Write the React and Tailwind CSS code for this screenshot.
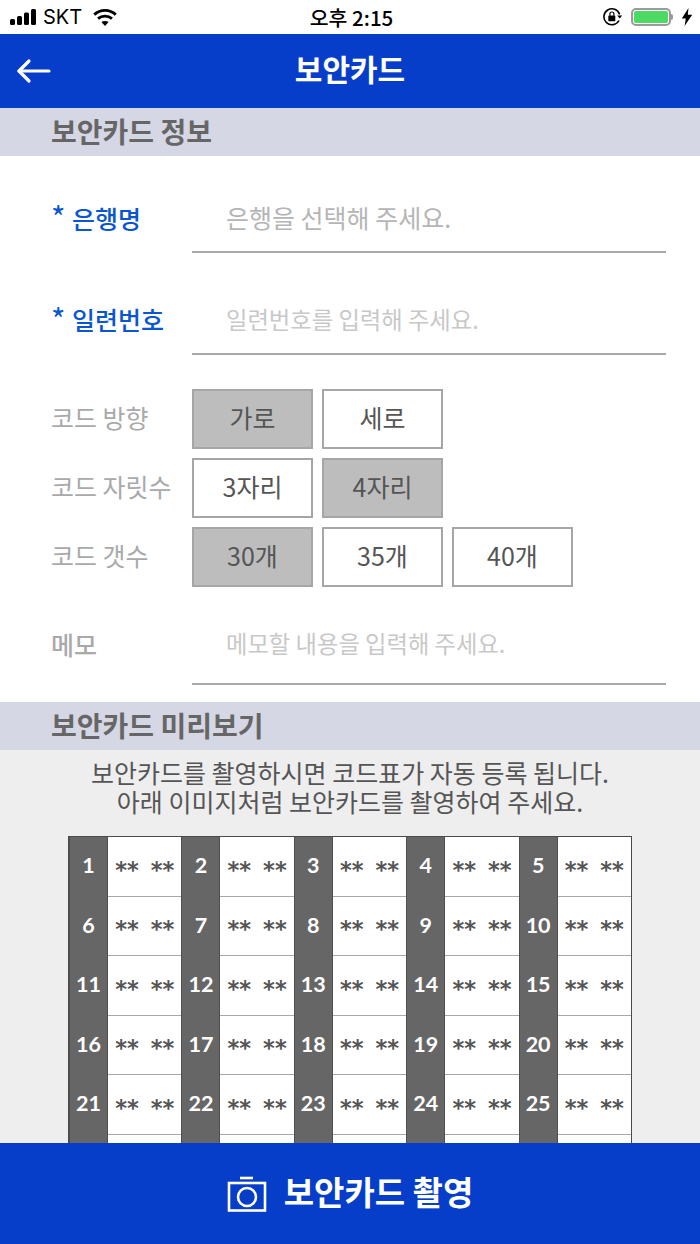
import React from 'react';

const KR = { fontFamily: '"Noto Sans CJK KR", "Noto Sans", sans-serif' };

const Signal = () => (
  <svg width="28" height="16" viewBox="0 0 28 16" fill="#000">
    <rect x="0" y="10" width="5" height="6" rx="1.5" />
    <rect x="7" y="7" width="5" height="9" rx="1.5" />
    <rect x="14" y="3.5" width="5" height="12.5" rx="1.5" />
    <rect x="21" y="0" width="5" height="16" rx="1.5" />
  </svg>
);

const Wifi = () => (
  <svg width="24" height="17" viewBox="0 0 24 17" fill="none" stroke="#000" strokeWidth="2.8">
    <path d="M1.2 5.6C7.4 0 16.6 0 22.8 5.6" />
    <path d="M5 9.6c4-3.4 10-3.4 14 0" />
    <path d="M12 17l-3.6-4c2-1.5 5.2-1.5 7.2 0z" fill="#000" stroke="none" />
  </svg>
);

const RotationLock = () => (
  <svg width="20" height="20" viewBox="0 0 20 20" fill="none">
    <path d="M17 13.5A8 8 0 1 1 17.6 7.5" stroke="#000" strokeWidth="1.6" />
    <path d="M15.2 8.4h5l-2.5 3z" fill="#000" />
    <rect x="6.3" y="8.6" width="7" height="5.6" rx="0.8" fill="#000" />
    <path d="M7.9 8.8V7a2 2 0 0 1 4 0v1.8" stroke="#000" strokeWidth="1.2" />
  </svg>
);

const Battery = () => (
  <div className="flex items-center">
    <div className="w-[40px] h-[18px] rounded-[5px] border-2 border-[#9a9a9a] p-[1px]">
      <div className="w-full h-full rounded-[2px] bg-[#4cd964]" />
    </div>
    <div className="w-[2px] h-[6px] bg-[#9a9a9a] rounded-r-sm" />
  </div>
);

const Bolt = () => (
  <svg width="12" height="18" viewBox="0 0 12 18" fill="#000">
    <path d="M7.5 0L0.8 10.4h4L3.6 18l7.6-11.2H6.8z" />
  </svg>
);

const BackArrow = () => (
  <svg width="36" height="26" viewBox="0 0 36 26" fill="none" stroke="#fff" strokeWidth="3.2" strokeLinecap="round" strokeLinejoin="round">
    <path d="M3 13h30" />
    <path d="M13 3L3 13l10 10" />
  </svg>
);

const Camera = () => (
  <svg width="40" height="36" viewBox="0 0 40 36" fill="none" stroke="#fff" strokeWidth="2.6">
    <path d="M13 2h13" />
    <rect x="2" y="7" width="36" height="27.5" />
    <circle cx="20" cy="21" r="9" />
  </svg>
);

const SectionBar = ({ children }) => (
  <div className="h-[48px] bg-[#d5d7e4] pl-[51px] pb-[2px] flex items-center text-[28px] font-bold text-[#666666]">
    {children}
  </div>
);

const InputRow = ({ label, placeholder, className, textClass, shift }) => (
  <div className={`flex items-center ${className}`}>
    <div className={`w-[192px] h-full pl-[51px] shrink-0 flex items-center ${shift}`}>{label}</div>
    <div className={`flex-1 h-full pl-[34px] flex items-center border-b-2 border-[#a8a8a8] ${shift} ${textClass}`}>{placeholder}</div>
  </div>
);

const Required = ({ children }) => (
  <span className="flex items-center text-[25px] font-medium text-[#0a55d0]">
    <span className="text-[31px] leading-[31px] w-[21px] font-normal -mt-[4px]">*</span>
    {children}
  </span>
);

const Opt = ({ label, on }) => (
  <div className={`w-[121px] h-[60px] pb-[3px] flex items-center justify-center border-2 border-[#a6a6a6] text-[25px] text-[#555555] ${on ? 'bg-[#bdbdbd]' : 'bg-white'}`}>
    {label}
  </div>
);

const OptRow = ({ title, options }) => (
  <div className="flex items-center h-[60px]">
    <div className="w-[192px] pl-[51px] pb-[3px] shrink-0 text-[25px] text-[#a9a9a9]">{title}</div>
    <div className="flex gap-[9px]">
      {options.map((o) => (
        <Opt key={o.label} label={o.label} on={o.on} />
      ))}
    </div>
  </div>
);

const rows = [1, 2, 3, 4, 5, 6];

const CodeTable = () => (
  <div className="mx-[68px] mt-[20px] border border-[#4a4a4a] bg-white">
    {rows.map((r) => (
      <div key={r} className="flex h-[59.5px]">
        {[1, 2, 3, 4, 5].map((c) => (
          <div key={c} className="flex flex-1">
            <div
              className="w-[39px] pb-[3px] bg-[#666666] border-x border-[#4f4f4f] flex items-center justify-center text-white font-bold text-[21.5px]"
              style={{ fontFamily: 'Lato, sans-serif' }}
            >
              {(r - 1) * 5 + c}
            </div>
            <div
              className="flex-1 pt-[9px] border-b border-[#a8a8a8] flex items-center justify-center gap-[12px] text-[#555555] font-bold text-[22.5px]"
              style={{ fontFamily: '"DejaVu Sans", sans-serif' }}
            >
              <span>**</span>
              <span>**</span>
            </div>
          </div>
        ))}
      </div>
    ))}
  </div>
);

export default function App() {
  return (
    <div className="w-[700px] h-[1244px] flex flex-col overflow-hidden bg-white" style={KR}>
      {/* status bar */}
      <div className="h-[34px] shrink-0 flex items-center justify-between pl-[10px] pr-[7px] relative">
        <div className="flex items-center">
          <Signal />
          <span className="ml-[5px] text-[20px] text-black" style={{ fontFamily: 'Inter, sans-serif' }}>SKT</span>
          <span className="ml-[11px]"><Wifi /></span>
        </div>
        <div className="absolute left-0 right-0 pl-[3px] text-center text-[20.5px] font-medium text-black">오후 2:15</div>
        <div className="flex items-center gap-[8px]">
          <span className="mr-[1px]"><RotationLock /></span>
          <Battery />
          <Bolt />
        </div>
      </div>

      {/* header */}
      <div className="h-[74px] shrink-0 bg-[#063dc9] flex items-center justify-center relative">
        <div className="absolute left-[16px] top-[24px]"><BackArrow /></div>
        <span className="text-white font-bold text-[30px] pb-[5px]">보안카드</span>
      </div>

      <div className="flex-1 min-h-0 overflow-hidden">
        <SectionBar>보안카드 정보</SectionBar>

        <div className="pr-[34px] pt-[16px]">
          <InputRow
            className="h-[81px]"
            shift="pt-[12px]"
            textClass="text-[25px] text-[#b5b5b5]"
            label={<Required>은행명</Required>}
            placeholder="은행을 선택해 주세요."
          />
          <InputRow
            className="h-[81px] mt-[21px]"
            shift="pt-[11px]"
            textClass="text-[23.3px] text-[#c8c8c8]"
            label={<Required>일련번호</Required>}
            placeholder="일련번호를 입력해 주세요."
          />
        </div>

        <div className="mt-[34px] flex flex-col gap-[9px]">
          <OptRow title="코드 방향" options={[{ label: '가로', on: true }, { label: '세로' }]} />
          <OptRow title="코드 자릿수" options={[{ label: '3자리' }, { label: '4자리', on: true }]} />
          <OptRow title="코드 갯수" options={[{ label: '30개', on: true }, { label: '35개' }, { label: '40개' }]} />
        </div>

        <div className="pr-[34px] mt-[16px]">
          <InputRow
            className="h-[82px]"
            shift="pt-[1px]"
            textClass="text-[23.3px] text-[#c8c8c8]"
            label={<span className="text-[25px] font-medium text-[#a9a9a9]">메모</span>}
            placeholder="메모할 내용을 입력해 주세요."
          />
        </div>

        <div className="mt-[17px]">
          <SectionBar>보안카드 미리보기</SectionBar>
        </div>

        <div className="bg-[#eeeeee] pt-[8px] pb-[40px]">
          <p className="text-center text-[25px] leading-[29px] text-[#555555]">
            보안카드를 촬영하시면 코드표가 자동 등록 됩니다.
            <br />
            아래 이미지처럼 보안카드를 촬영하여 주세요.
          </p>
          <CodeTable />
        </div>
      </div>

      {/* bottom button */}
      <div className="h-[101px] shrink-0 bg-[#063dc9] flex items-center justify-center gap-[17px]">
        <Camera />
        <span className="text-white font-bold text-[33px] pb-[4px]">보안카드 촬영</span>
      </div>
    </div>
  );
}
